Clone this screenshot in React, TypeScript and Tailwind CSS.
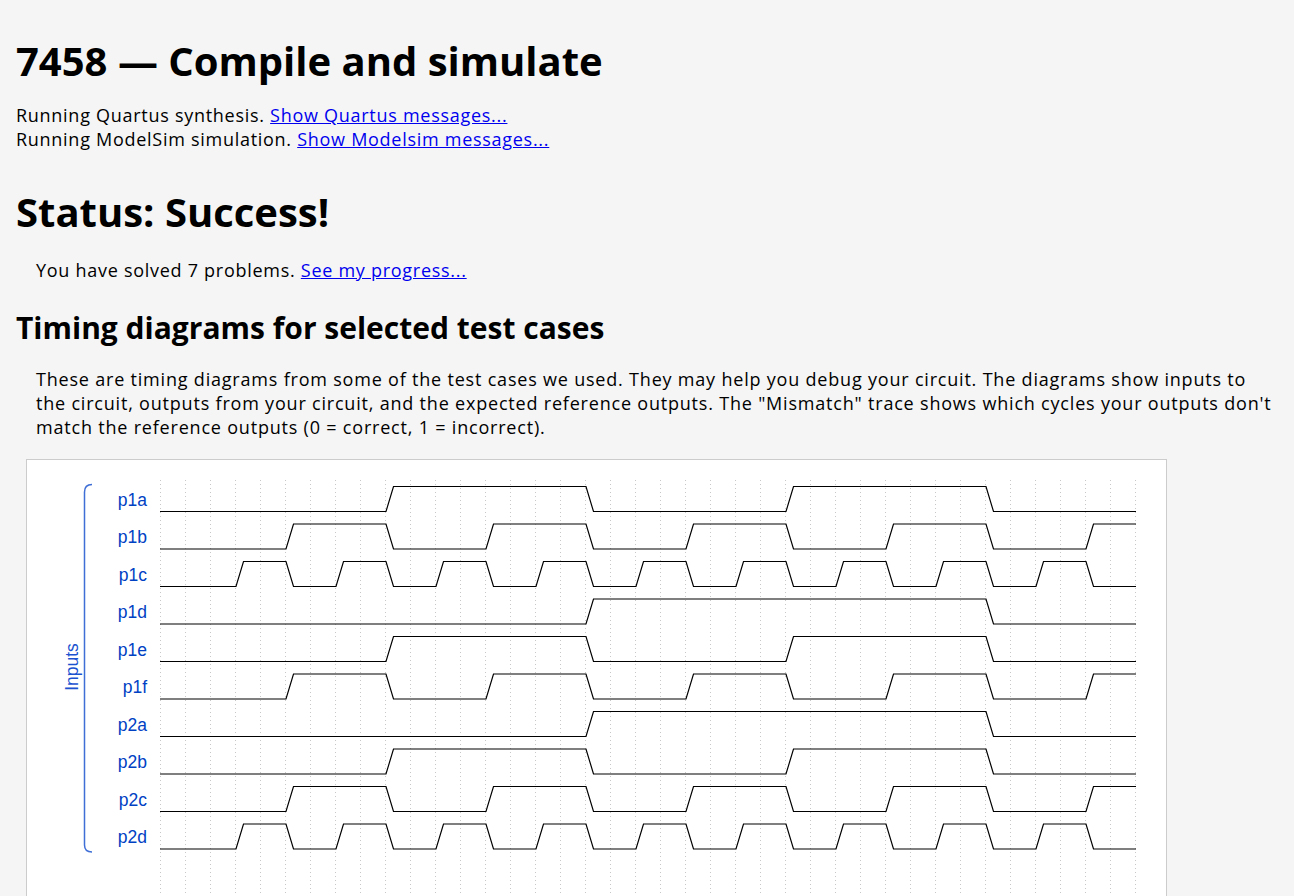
import React from 'react';

const rows: { name: string; wave: string }[] = [
  { name: 'p1a', wave: 'A' },
  { name: 'p1b', wave: 'B' },
  { name: 'p1c', wave: 'C' },
  { name: 'p1d', wave: 'D' },
  { name: 'p1e', wave: 'A' },
  { name: 'p1f', wave: 'B' },
  { name: 'p2a', wave: 'D' },
  { name: 'p2b', wave: 'A' },
  { name: 'p2c', wave: 'B' },
  { name: 'p2d', wave: 'C' },
];

// value per cycle (initial segment, then 18 cycles)
const bits = (kind: string) => {
  const out: number[] = [0];
  for (let k = 0; k < 18; k++) {
    if (kind === 'C') out.push(k % 2 === 0 ? 1 : 0);
    if (kind === 'B') out.push(Math.floor((k + 3) / 2) % 2 === 0 ? 1 : 0);
    if (kind === 'A') out.push(k >= 3 && k <= 6 ? 1 : k >= 11 && k <= 14 ? 1 : 0);
    if (kind === 'D') out.push(k >= 7 && k <= 14 ? 1 : 0);
  }
  return out;
};

const wavePath = (kind: string, hi: number, lo: number) => {
  const v = bits(kind);
  let d = `M160 ${v[0] ? hi : lo}`;
  for (let k = 0; k < 18; k++) {
    const x0 = 236 + 50 * k;
    const prev = v[k];
    const cur = v[k + 1];
    if (prev !== cur) {
      d += ` L${x0} ${prev ? hi : lo} L${x0 + 7.5} ${cur ? hi : lo}`;
    }
  }
  d += ` L1136 ${v[18] ? hi : lo}`;
  return d;
};

const Diagram = () => {
  const grid = Array.from({ length: 40 }, (_, i) => 160.5 + 25 * i);
  return (
    <svg width="1140" height="460" className="block">
      <g transform="translate(-27,-460)">
        {grid.map((x) => (
          <line key={x} x1={x} y1={480} x2={x} y2={930} stroke="#c8c8c8" strokeWidth="1" strokeDasharray="1 3" />
        ))}
        <path d="M92 484.5 Q84.5 484.5 84.5 492 L84.5 845 Q84.5 852 92 852" fill="none" stroke="#3f6fd6" strokeWidth="1.5" />
        <text
          x={78}
          y={667}
          transform="rotate(-90 78 667)"
          textAnchor="middle"
          fill="#1a52d0"
          style={{ fontFamily: '"Liberation Sans", Arial, sans-serif', fontSize: '17.5px' }}
        >
          Inputs
        </text>
        {rows.map((r, i) => {
          const hi = 486.5 + 37.5 * i;
          const lo = hi + 25;
          return (
            <g key={r.name}>
              <text
                x={147}
                y={hi + 19}
                textAnchor="end"
                fill="#0041c4"
                style={{ fontFamily: '"Liberation Sans", Arial, sans-serif', fontSize: '17.5px' }}
              >
                {r.name}
              </text>
              <path d={wavePath(r.wave, hi, lo)} fill="none" stroke="#000" strokeWidth="1.2" />
            </g>
          );
        })}
      </g>
    </svg>
  );
};

export default function App() {
  return (
    <div className="min-h-[896px] overflow-hidden bg-[#f5f5f5] pl-4 pr-4 text-[18px] leading-[24px] text-black font-['Open_Sans',sans-serif]">
      <h1 className="pt-[39px] text-[40px] leading-[44px] font-bold">7458 — Compile and simulate</h1>
      <div className="mt-[20px] tracking-[0.72px]">
        Running Quartus synthesis. <a href="#" className="text-[#0000ee] underline">Show Quartus messages...</a>
        <br />
        Running ModelSim simulation. <a href="#" className="text-[#0000ee] underline">Show Modelsim messages...</a>
      </div>
      <h1 className="mt-[39px] text-[40px] leading-[44px] font-bold">Status: Success!</h1>
      <p className="mt-[24px] ml-5 tracking-[0.72px]">
        You have solved 7 problems. <a href="#" className="text-[#0000ee] underline">See my progress...</a>
      </p>
      <h2 className="mt-[30px] text-[30px] leading-[32px] font-bold">Timing diagrams for selected test cases</h2>
      <p className="mt-[23px] ml-5 tracking-[0.8px]">
        These are timing diagrams from some of the test cases we used. They may help you debug your circuit. The diagrams show inputs to the circuit, outputs from your circuit, and the expected reference outputs. The "Mismatch" trace shows which cycles your outputs don't match the reference outputs (0 = correct, 1 = incorrect).
      </p>
      <div className="mt-[20px] ml-[10px] w-[1141px] border border-[#cccccc] bg-white">
        <Diagram />
      </div>
    </div>
  );
}
